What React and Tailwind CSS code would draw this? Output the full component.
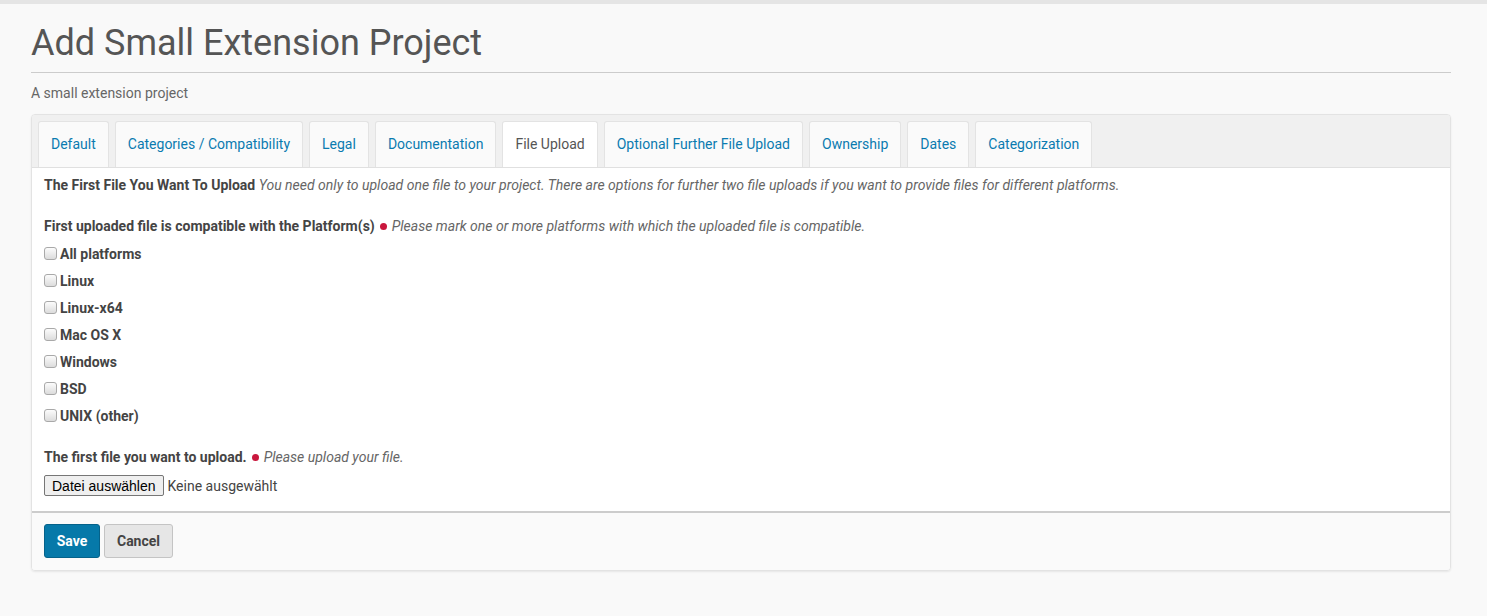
import React from 'react';

const tabs = [
  'Default',
  'Categories / Compatibility',
  'Legal',
  'Documentation',
  'File Upload',
  'Optional Further File Upload',
  'Ownership',
  'Dates',
  'Categorization',
];

const platforms = ['All platforms', 'Linux', 'Linux-x64', 'Mac OS X', 'Windows', 'BSD', 'UNIX (other)'];

const Dot = () => <span className="inline-block w-[7px] h-[7px] rounded-full bg-[#c9173d] mx-[5px] align-middle relative top-[-1px]" />;

const App = () => {
  return (
    <div className="min-h-[616px] bg-[#f9f9f9] text-[#555] font-['Roboto',sans-serif]">
      <div className="h-[4px] bg-[#e5e5e5]" />
      <div className="ml-[31px] w-[1420px]">
        <h1 className="text-[36px] leading-[40px] mt-[19px] pb-[9px] border-b border-[#ccc] text-[#555]">Add Small Extension Project</h1>
        <p className="text-[14px] mt-[12px] leading-[16px] text-[#666]">A small extension project</p>

        <div className="mt-[13px] border border-[#e3e3e3] rounded-[4px] shadow-[0_1px_2px_rgba(0,0,0,0.08)] overflow-hidden">
          <div className="bg-[#f0f0f0] flex gap-[6px] px-[6px] pt-[6px] border-b border-[#e0e0e0]">
            {tabs.map((t) => {
              const active = t === 'File Upload';
              return (
                <div
                  key={t}
                  className={
                    active
                      ? 'h-[46px] px-[12px] flex items-center text-[14px] text-[#555] bg-white border border-[#e3e3e3] border-b-0 rounded-t-[3px]'
                      : 'h-[46px] px-[12px] flex items-center text-[14px] text-[#0a7bb0] bg-[#fafafa] border border-[#e3e3e3] border-b-0 rounded-t-[3px]'
                  }
                >
                  {t}
                </div>
              );
            })}
          </div>

          <div className="bg-white px-[12px] pt-[9px] pb-[15px] text-[14px] leading-[16px]">
            <div>
              <span className="font-bold text-[#444]">The First File You Want To Upload</span>{' '}
              <span className="italic text-[#666]">You need only to upload one file to your project. There are options for further two file uploads if you want to provide files for different platforms.</span>
            </div>

            <div className="mt-[25px]">
              <span className="font-bold text-[#444]">First uploaded file is compatible with the Platform(s)</span>
              <Dot />
              <span className="italic text-[#666]">Please mark one or more platforms with which the uploaded file is compatible.</span>
            </div>

            <div className="mt-[6px] flex flex-col">
              {platforms.map((p) => (
                <label key={p} className="h-[27px] flex items-center gap-[3px] font-bold text-[#444]">
                  <input
                    type="checkbox"
                    className="appearance-none m-0 w-[13px] h-[13px] rounded-[3px] border border-[#a9a9a9] bg-gradient-to-b from-[#fcfcfc] to-[#dcdcdc]"
                  />
                  <span>{p}</span>
                </label>
              ))}
            </div>

            <div className="mt-[20px]">
              <span className="font-bold text-[#444]">The first file you want to upload.</span>
              <Dot />
              <span className="italic text-[#666]">Please upload your file.</span>
            </div>

            <div className="mt-[10px] flex items-center gap-[4px]">
              <button className="h-[21px] px-[7px] text-[14px] leading-[16px] font-['Liberation_Sans',Arial,sans-serif] text-black bg-[#efefef] border border-[#767676] rounded-[2px]">Datei auswählen</button>
              <span className="text-[14px] text-[#444]">Keine ausgewählt</span>
            </div>
          </div>

          <div className="bg-[#fafafa] border-t-2 border-[#ccc] px-[12px] pt-[11px] pb-[12px] flex gap-[4px]">
            <button className="h-[34px] w-[56px] rounded-[3px] bg-[#0679a9] border border-[#05628a] text-white font-bold text-[14px]">Save</button>
            <button className="h-[34px] w-[69px] rounded-[3px] bg-[#e6e6e6] border border-[#c4c4c4] text-[#444] font-bold text-[14px]">Cancel</button>
          </div>
        </div>
      </div>
    </div>
  );
};

export default App;
